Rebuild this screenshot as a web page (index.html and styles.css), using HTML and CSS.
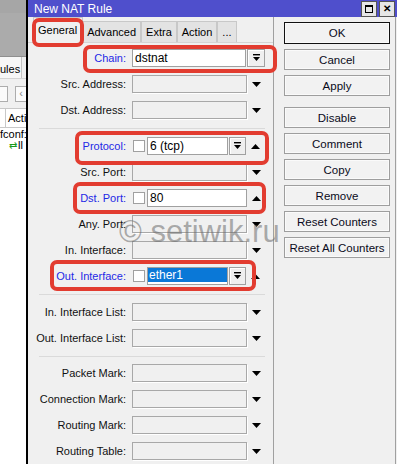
FILE: index.html
```html
<!DOCTYPE html>
<html lang="en">
<head>
    <meta charset="UTF-8">
    <meta name="viewport" content="width=device-width, initial-scale=1.0">
    <title>New NAT Rule</title>
    <link rel="stylesheet" href="styles.css">
</head>
<body>
    <div class="screen">
        <!-- window behind the dialog -->
        <div class="behind">
            <div class="bg-top"></div>
            <div class="bg-tabs"><span class="bg-tab">ules</span></div>
            <div class="bg-tools"><span class="tb tb-a"></span><span class="tb tb-b">&lsaquo;</span></div>
            <div class="bg-head"><span class="bg-cell">Actio</span></div>
            <div class="bg-row">fconf:</div>
            <div class="bg-row"><span class="bg-ico">&#8644;</span>ll r</div>
        </div>

        <div class="dialog">
            <div class="titlebar">
                <span class="title">New NAT Rule</span>
                <div class="wbtns">
                    <span class="wbtn"><span class="sq"></span></span>
                    <span class="wbtn x">&#10005;</span>
                </div>
            </div>
            <div class="dbody">
                <div class="pane">
                    <div class="tabs">
                        <span class="tab active">General</span>
                        <span class="tab">Advanced</span>
                        <span class="tab">Extra</span>
                        <span class="tab">Action</span>
                        <span class="tab">...</span>
                    </div>
                    <div class="form">
                        <div class="row">
                            <label class="lbl blue">Chain:</label>
                            <div class="ctrl">
                                <span class="inp w-chain">dstnat</span>
                                <span class="dbtn"><svg width="9" height="8" viewBox="0 0 9 8"><rect x="1" y="0" width="7" height="1.4" fill="#000"/><path d="M1 3h7L4.5 7z" fill="#000"/></svg></span>
                            </div>
                        </div>
                        <div class="row">
                            <label class="lbl">Src. Address:</label>
                            <div class="ctrl"><span class="box"></span><span class="arr"><svg width="9" height="5" viewBox="0 0 9 5"><path d="M0 0h9L4.5 5z" fill="#000"/></svg></span></div>
                        </div>
                        <div class="row">
                            <label class="lbl">Dst. Address:</label>
                            <div class="ctrl"><span class="box"></span><span class="arr"><svg width="9" height="5" viewBox="0 0 9 5"><path d="M0 0h9L4.5 5z" fill="#000"/></svg></span></div>
                        </div>
                        <div class="sep"></div>
                        <div class="row">
                            <label class="lbl blue">Protocol:</label>
                            <div class="ctrl">
                                <span class="chk"></span>
                                <span class="inp w-short">6 (tcp)</span>
                                <span class="dbtn sm"><svg width="9" height="8" viewBox="0 0 9 8"><rect x="1" y="0" width="7" height="1.4" fill="#000"/><path d="M1 3h7L4.5 7z" fill="#000"/></svg></span>
                                <span class="arr"><svg width="9" height="5" viewBox="0 0 9 5"><path d="M0 5h9L4.5 0z" fill="#000"/></svg></span>
                            </div>
                        </div>
                        <div class="row">
                            <label class="lbl">Src. Port:</label>
                            <div class="ctrl"><span class="box"></span><span class="arr"><svg width="9" height="5" viewBox="0 0 9 5"><path d="M0 0h9L4.5 5z" fill="#000"/></svg></span></div>
                        </div>
                        <div class="row">
                            <label class="lbl blue">Dst. Port:</label>
                            <div class="ctrl">
                                <span class="chk"></span>
                                <span class="inp w-long">80</span>
                                <span class="arr"><svg width="9" height="5" viewBox="0 0 9 5"><path d="M0 5h9L4.5 0z" fill="#000"/></svg></span>
                            </div>
                        </div>
                        <div class="row">
                            <label class="lbl">Any. Port:</label>
                            <div class="ctrl"><span class="box"></span><span class="arr"><svg width="9" height="5" viewBox="0 0 9 5"><path d="M0 0h9L4.5 5z" fill="#000"/></svg></span></div>
                        </div>
                        <div class="row">
                            <label class="lbl">In. Interface:</label>
                            <div class="ctrl"><span class="box"></span><span class="arr"><svg width="9" height="5" viewBox="0 0 9 5"><path d="M0 0h9L4.5 5z" fill="#000"/></svg></span></div>
                        </div>
                        <div class="row">
                            <label class="lbl blue">Out. Interface:</label>
                            <div class="ctrl">
                                <span class="chk"></span>
                                <span class="inp w-short"><span class="sel">ether1</span></span>
                                <span class="dbtn sm"><svg width="9" height="8" viewBox="0 0 9 8"><rect x="1" y="0" width="7" height="1.4" fill="#000"/><path d="M1 3h7L4.5 7z" fill="#000"/></svg></span>
                                <span class="arr"><svg width="9" height="5" viewBox="0 0 9 5"><path d="M0 5h9L4.5 0z" fill="#000"/></svg></span>
                            </div>
                        </div>
                        <div class="sep"></div>
                        <div class="row">
                            <label class="lbl">In. Interface List:</label>
                            <div class="ctrl"><span class="box"></span><span class="arr"><svg width="9" height="5" viewBox="0 0 9 5"><path d="M0 0h9L4.5 5z" fill="#000"/></svg></span></div>
                        </div>
                        <div class="row">
                            <label class="lbl">Out. Interface List:</label>
                            <div class="ctrl"><span class="box"></span><span class="arr"><svg width="9" height="5" viewBox="0 0 9 5"><path d="M0 0h9L4.5 5z" fill="#000"/></svg></span></div>
                        </div>
                        <div class="sep short"></div>
                        <div class="row">
                            <label class="lbl">Packet Mark:</label>
                            <div class="ctrl"><span class="box"></span><span class="arr"><svg width="9" height="5" viewBox="0 0 9 5"><path d="M0 0h9L4.5 5z" fill="#000"/></svg></span></div>
                        </div>
                        <div class="row">
                            <label class="lbl">Connection Mark:</label>
                            <div class="ctrl"><span class="box"></span><span class="arr"><svg width="9" height="5" viewBox="0 0 9 5"><path d="M0 0h9L4.5 5z" fill="#000"/></svg></span></div>
                        </div>
                        <div class="row">
                            <label class="lbl">Routing Mark:</label>
                            <div class="ctrl"><span class="box"></span><span class="arr"><svg width="9" height="5" viewBox="0 0 9 5"><path d="M0 0h9L4.5 5z" fill="#000"/></svg></span></div>
                        </div>
                        <div class="row">
                            <label class="lbl">Routing Table:</label>
                            <div class="ctrl"><span class="box"></span><span class="arr"><svg width="9" height="5" viewBox="0 0 9 5"><path d="M0 0h9L4.5 5z" fill="#000"/></svg></span></div>
                        </div>
                    </div>
                </div>
                <div class="side">
                    <button class="btn default">OK</button>
                    <button class="btn">Cancel</button>
                    <button class="btn">Apply</button>
                    <button class="btn gap">Disable</button>
                    <button class="btn">Comment</button>
                    <button class="btn">Copy</button>
                    <button class="btn">Remove</button>
                    <button class="btn">Reset Counters</button>
                    <button class="btn">Reset All Counters</button>
                </div>
            </div>
        </div>

        <!-- annotations drawn over the screenshot -->
        <div class="mark m-general"></div>
        <div class="mark m-chain"></div>
        <div class="mark m-proto"></div>
        <div class="mark m-dport"></div>
        <div class="mark m-out"></div>
        <div class="watermark">&copy; setiwik.ru</div>
    </div>
</body>
</html>
```

FILE: styles.css
```css
body {
    margin: 0;
    padding: 0;
    font-family: "Liberation Sans", Arial, sans-serif;
    font-size: 11px;
    color: #000;
}
.screen {
    position: relative;
    width: 397px;
    height: 464px;
    display: flex;
    overflow: hidden;
    background: #fff;
}

/* background window */
.behind {
    width: 26px;
    flex-shrink: 0;
    overflow: hidden;
    white-space: nowrap;
    background: #fff;
}
.bg-top {
    height: 57px;
    background: #ababab;
    box-sizing: border-box;
    border-top: 13px solid #a6a6a6;
    border-bottom: 1px solid #8f8f8f;
}
.bg-tabs {
    height: 21px;
    background: #f0f0f0;
    display: flex;
}
.bg-tab {
    width: 22px;
    height: 21px;
    line-height: 24px;
    background: #f7f7f7;
    border-right: 1px solid #c4c4c4;
    box-sizing: border-box;
}
.bg-tools {
    height: 30px;
    background: #f0f0f0;
    display: flex;
    align-items: center;
    gap: 7px;
    border-top: 1px solid #d4d4d4;
    box-sizing: border-box;
}
.tb {
    height: 16px;
    border: 1px solid #adadad;
    background: #fbfbfb;
    box-sizing: border-box;
    color: #888;
    line-height: 13px;
    text-align: center;
}
.tb-a { width: 9px; border-left: none; }
.tb-b { width: 12px; border-right: none; }
.bg-head {
    height: 20px;
    border-top: 1px solid #c8c8c8;
    border-bottom: 1px solid #c8c8c8;
    box-sizing: border-box;
    background: #fff;
    padding-left: 5px;
}
.bg-cell {
    display: block;
    height: 18px;
    line-height: 18px;
    border-left: 1px solid #c8c8c8;
    padding-left: 2px;
}
.bg-row {
    height: 11px;
    line-height: 12px;
}
.bg-row:last-child {
    height: 13px;
    padding-left: 9px;
}
.bg-ico {
    color: #1a9a1a;
    font-size: 10px;
    margin-right: 1px;
}

/* dialog */
.dialog {
    width: 371px;
    flex-shrink: 0;
    border-left: 2px solid #000;
    background: #f0f0f0;
    display: flex;
    flex-direction: column;
}
.titlebar {
    height: 19px;
    background: #4f4fcc;
    display: flex;
    align-items: center;
    justify-content: space-between;
    padding: 0 4px 0 6px;
}
.title {
    color: #fff;
    font-size: 12px;
}
.wbtns {
    display: flex;
    gap: 2px;
}
.wbtn {
    width: 14px;
    height: 14px;
    background: #e6e6e6;
    border: 1px solid #555;
    display: flex;
    align-items: center;
    justify-content: center;
    font-size: 10px;
    font-weight: bold;
}
.sq {
    width: 8px;
    height: 8px;
    border: 1px solid #000;
    border-top-width: 2px;
    box-sizing: border-box;
}
.dbody {
    flex: 1;
    display: flex;
}
.pane {
    width: 245px;
    border-right: 1px solid #a0a0a0;
}
.side {
    width: 122px;
    border-right: 1px solid #a0a0a0;
    padding: 5px 0 0 10px;
    box-sizing: border-box;
    display: flex;
    flex-direction: column;
    align-items: flex-start;
}

/* tabs */
.tabs {
    height: 26px;
    display: flex;
    align-items: flex-end;
    padding-left: 5px;
    border-bottom: 1px solid #d4d4d4;
    box-sizing: border-box;
}
.tab {
    height: 21px;
    line-height: 21px;
    padding: 0 4px;
    background: #e3e3e3;
    border: 1px solid #c8c8c8;
    border-bottom: none;
    box-sizing: border-box;
    margin-bottom: 0;
}
.tab.active {
    height: 26px;
    line-height: 24px;
    background: #f0f0f0;
    padding: 0 5px 0 4px;
    margin-bottom: -1px;
    margin-right: -1px;
}

/* form rows */
.form {
    padding-top: 2px;
}
.row {
    height: 26px;
    display: flex;
    align-items: center;
}
.lbl {
    width: 98px;
    text-align: right;
    margin-right: 6px;
    color: #111;
    white-space: nowrap;
}
.lbl.blue {
    color: #1e28e6;
}
.ctrl {
    width: 133px;
    height: 18px;
    display: flex;
    align-items: center;
}
.box {
    width: 115px;
    height: 18px;
    box-sizing: border-box;
    border: 1px solid #a8a8a8;
    box-shadow: 1px 1px 0 #fff;
}
.arr {
    width: 18px;
    height: 18px;
    display: flex;
    align-items: center;
    justify-content: center;
}
.inp {
    height: 18px;
    box-sizing: border-box;
    border: 1px solid #a0a0a0;
    background: #fff;
    padding: 1px 2px;
    line-height: 14px;
    font-size: 12px;
    white-space: nowrap;
    overflow: hidden;
}
.w-chain { width: 114px; margin-right: 1px; }
.w-short { width: 81px; margin-right: 1px; }
.w-long { width: 100px; }
.sel {
    display: block;
    margin: -1px -2px;
    height: 14px;
    padding: 0 1px;
    background: #0a78d7;
    color: #fff;
}
.chk {
    width: 12px;
    height: 12px;
    margin: 0 2px 0 1px;
    box-sizing: border-box;
    border: 1px solid #a0a0a0;
    background: #fff;
}
.dbtn {
    width: 18px;
    height: 18px;
    box-sizing: border-box;
    border: 1px solid #a0a0a0;
    box-shadow: inset 1px 1px 0 #fff;
    background: #efefef;
    display: flex;
    align-items: center;
    justify-content: center;
}
.dbtn.sm {
    width: 17px;
}
.sep {
    height: 10px;
    margin-left: 11px;
    width: 226px;
    background: linear-gradient(#dadada, #dadada) 0 5px / 100% 1px no-repeat;
}
.sep.short {
    height: 9px;
}

/* right side buttons */
.btn {
    width: 106px;
    height: 21px;
    margin-bottom: 5px;
    padding: 0;
    font-family: inherit;
    font-size: 11.5px;
    color: #0a0a20;
    background: #f2f2f2;
    border: 1px solid #9e9e9e;
    box-shadow: inset 0 0 0 1px #fafafa;
}
.btn.default {
    height: 22px;
    border-color: #111;
}
.btn.gap {
    margin-top: 6px;
}

/* overlays */
.mark {
    position: absolute;
    border: 4px solid #e23c30;
    border-radius: 7px;
    box-sizing: border-box;
}
.m-general { left: 32px; top: 18px; width: 52px; height: 29px; }
.m-chain { left: 83px; top: 45px; width: 194px; height: 28px; }
.m-proto { left: 75px; top: 131px; width: 194px; height: 34px; }
.m-dport { left: 73px; top: 182px; width: 193px; height: 32px; }
.m-out { left: 50px; top: 260px; width: 206px; height: 31px; }
.watermark {
    position: absolute;
    left: 119px;
    top: 216px;
    font-size: 31px;
    line-height: 31px;
    color: rgba(105, 105, 105, 0.55);
    white-space: nowrap;
}
```
